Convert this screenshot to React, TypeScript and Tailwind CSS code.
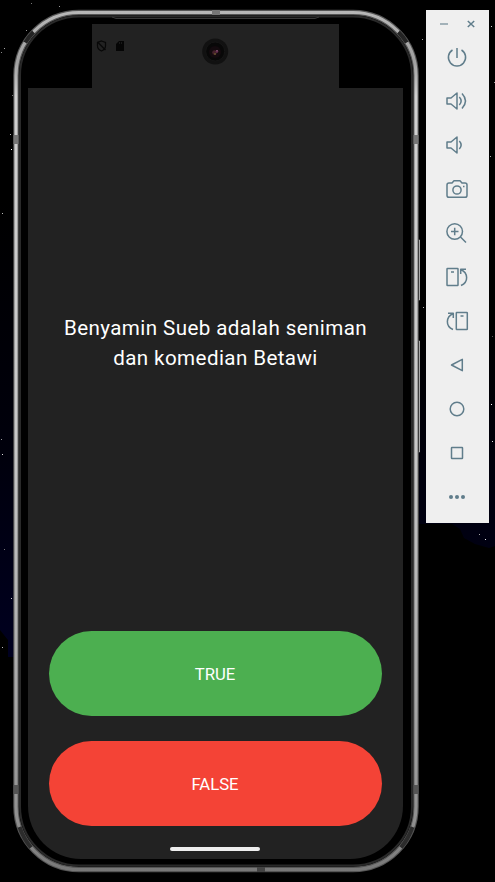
import React from "react";

const stars: [number, number, string][] = [
  [31, 3, "#777"], [59, 6, "#999"], [26, 30, "#999"], [4, 48, "#aaa"], [1, 52, "#888"],
  [12, 95, "#777"], [10, 134, "#bbb"], [11, 149, "#fff"], [2, 213, "#bbb"], [1, 439, "#999"],
  [2, 454, "#ddd"], [4, 549, "#777"], [11, 598, "#ccc"], [2, 647, "#bbb"], [422, 39, "#aaa"],
  [491, 26, "#ccc"], [494, 82, "#999"], [490, 156, "#aaa"], [492, 336, "#555"], [423, 307, "#bbb"],
  [491, 404, "#fff"], [492, 441, "#ddd"], [479, 534, "#aaa"], [485, 539, "#eee"],
];

function Backdrop() {
  return (
    <svg className="pointer-events-none absolute inset-0" width="495" height="882" viewBox="0 0 495 882">
      <defs>
        <linearGradient id="night" x1="0" y1="200" x2="0" y2="657" gradientUnits="userSpaceOnUse">
          <stop offset="0" stopColor="#000" />
          <stop offset=".55" stopColor="#00000c" />
          <stop offset="1" stopColor="#000020" />
        </linearGradient>
        <linearGradient id="haze" x1="0" y1="330" x2="0" y2="546" gradientUnits="userSpaceOnUse">
          <stop offset="0" stopColor="#000" />
          <stop offset="1" stopColor="#000012" />
        </linearGradient>
      </defs>
      <path d="M0 200H14V657H8V640L0 630Z" fill="url(#night)" />
      <path d="M419 330H495V546L489 548L475 544L464 538L460 529L452 524H419Z" fill="url(#haze)" />
      {stars.map(([x, y, c], i) => (
        <rect key={i} x={x} y={y} width="1" height="1" fill={c} />
      ))}
    </svg>
  );
}

function PhoneFrame() {
  return (
    <svg className="pointer-events-none absolute inset-0" width="426" height="882" viewBox="0 0 426 882" fill="none">
      <defs>
        <linearGradient id="metal" x1="0" y1="10" x2="0" y2="872" gradientUnits="userSpaceOnUse">
          <stop offset="0" stopColor="#b8b8b8" />
          <stop offset=".06" stopColor="#a0a0a0" />
          <stop offset=".1" stopColor="#d0d0d0" />
          <stop offset=".5" stopColor="#c8c8c8" />
          <stop offset=".8" stopColor="#a8a8a8" />
          <stop offset=".94" stopColor="#909090" />
          <stop offset="1" stopColor="#777" />
        </linearGradient>
      </defs>
      <path d="M418.500 240H419.500V300H418.500M418.500 341H419.500V452H418.500" stroke="#aaa" />
      <rect x="16" y="12.500" width="400" height="857" rx="63" stroke="#555" strokeWidth="5.500" />
      <rect x="16" y="12.500" width="400" height="857" rx="63" stroke="url(#metal)" strokeWidth="3.200" />
      <rect x="20" y="16.500" width="392" height="849" rx="59" stroke="#292929" strokeWidth="2" />
      <path d="M25.200 42.500A63 63 0 0 1 33.500 32M398.500 32A63 63 0 0 1 406.800 42.500" stroke="#242424" strokeWidth="4" />
      <path d="M19.500 827A63 63 0 0 0 31 847.500M401 847.500A63 63 0 0 0 412.500 827" stroke="#2c2c2c" strokeWidth="4" />
      <path d="M112 17L116 18.500H315L319 17" stroke="#383838" />
      <path d="M212 12.500H220" stroke="#777" strokeWidth="5" />
      <path d="M257 869.500H265" stroke="#444" strokeWidth="5" />
      <path d="M16 135V144M416 135V144" stroke="#777" strokeWidth="5" />
      <path d="M16 785V794M416 785V794" stroke="#555" strokeWidth="5" />
    </svg>
  );
}

function StatusBar() {
  return (
    <div className="mx-auto h-16 w-[247px] shrink-0 bg-[#222222]">
      <svg width="247" height="64" viewBox="92 24 247 64" fill="none">
        <path d="M101.500 41L105.500 42.500V46C105.500 48.500 103.700 50 101.500 51C99.300 50 97.500 48.500 97.500 46V42.500Z" stroke="#080808" strokeWidth="1.200" />
        <path d="M97.500 42L105.500 50" stroke="#080808" strokeWidth="1.200" />
        <path d="M119 41H124V51H116V44Z" fill="#050505" />
        <path d="M119.500 42V44M121.500 42V44" stroke="#222" strokeWidth=".7" />
        <circle cx="215.200" cy="51.500" r="13" fill="#111" />
        <circle cx="215.200" cy="51.500" r="9.500" fill="#080808" stroke="#151515" />
        <circle cx="215" cy="52" r="6" fill="#130a0e" />
        <circle cx="214.500" cy="52.500" r="2.300" fill="#43202a" />
        <circle cx="217" cy="51.500" r="1.300" fill="#683052" />
        <circle cx="215" cy="54" r="1" fill="#66502b" />
        <circle cx="217" cy="50.500" r=".6" fill="#aa7896" />
      </svg>
    </div>
  );
}

function AnswerButton({ children, className }: { children: string; className: string }) {
  return (
    <button className={`flex h-[85px] w-[333px] shrink-0 items-center justify-center rounded-[42.500px] pt-[3px] text-[16.700px] text-white ${className}`}>
      {children}
    </button>
  );
}

function Icon({ children }: { children: React.ReactNode }) {
  return (
    <button className="flex h-11 w-full items-center justify-center">
      <svg width="24" height="24" viewBox="0 0 24 24" fill="none" stroke="#607d8b" strokeWidth="1.500" strokeLinejoin="round">
        {children}
      </svg>
    </button>
  );
}

function Toolbar() {
  return (
    <aside className="mt-[10px] flex h-[513px] w-[63px] flex-col bg-[#efefef]">
      <div className="flex h-[25px] shrink-0">
        <svg width="63" height="25" viewBox="0 0 63 25" fill="none" stroke="#607d8b">
          <path d="M14 14H22" stroke="#9aabb3" strokeWidth="1.800" />
          <path d="M41.800 11L48.200 17M48.200 11L41.800 17" strokeWidth="1.500" />
        </svg>
      </div>
      <div className="flex flex-col pr-px">
        <Icon><path d="M12 3V13M7.500 5A8.600 8.600 0 1 0 16.500 5" /></Icon>
        <Icon><path d="M2 9H6L12 4V20L6 15H2ZM14.300 8Q18 12 14.300 16M17 4.500Q24 12 17 19.500" /></Icon>
        <Icon><path d="M2 9H6L12 4V20L6 15H2ZM14.300 8Q18 12 14.300 16" /></Icon>
        <Icon><path d="M4 6H7L9 3.700H15L17 6H20Q22 6 22 8V18.500Q22 20.300 20 20.300H4Q2 20.300 2 18.500V8Q2 6 4 6Z" /><circle cx="12" cy="13" r="4.100" /><path d="M18 9.500H19.500" /></Icon>
        <Icon><circle cx="9.700" cy="10.500" r="7.800" /><path d="M6 10.500H13.500M9.700 6.700V14.300M15.500 16L21 21.500" /></Icon>
        <Icon><rect x="2" y="3.500" width="11" height="17" rx=".5" /><path d="M6 7H9M15.700 9V4.300H21M16 4.500C23 8 24 17 16 20.500" /></Icon>
        <Icon><rect x="11.300" y="3.500" width="11" height="17" rx=".5" /><path d="M15.500 7H18.500M8.300 9V4.300H3M8 4.500C1 8 0 17 8 20.500" /></Icon>
        <Icon><path d="M17.300 6.300V17.700L6.500 12Z" /></Icon>
        <Icon><circle cx="12" cy="12" r="6.800" /></Icon>
        <Icon><rect x="6.500" y="6.500" width="11" height="11" rx=".5" /></Icon>
        <Icon><g fill="#607d8b" stroke="none"><circle cx="6" cy="12" r="2" /><circle cx="12" cy="12" r="2" /><circle cx="18" cy="12" r="2" /></g></Icon>
      </div>
    </aside>
  );
}

export default function App() {
  return (
    <div className="relative flex h-[882px] w-[495px] overflow-hidden bg-black font-['Roboto',sans-serif]">
      <Backdrop />
      <main className="relative w-[426px] shrink-0 pt-6 pl-7">
        <PhoneFrame />
        <div className="relative flex h-[835px] w-[375px] flex-col">
          <StatusBar />
          <section className="flex flex-1 flex-col items-center rounded-b-[53px] bg-[#222222] pr-px">
            <div className="flex h-[543px] items-center justify-center">
              <h1 className="pb-[34px] pl-px text-center text-[20.600px] leading-[30px] tracking-[0.400px] text-white">
                Benyamin Sueb adalah seniman<br />dan komedian Betawi
              </h1>
            </div>
            <AnswerButton className="bg-[#4caf50]">TRUE</AnswerButton>
            <AnswerButton className="mt-[25px] bg-[#f44336]">FALSE</AnswerButton>
            <div className="mt-[21px] h-[3.500px] w-[90px] rounded-full bg-[#eeeeee]" />
          </section>
        </div>
      </main>
      <div className="relative"><Toolbar /></div>
    </div>
  );
}
